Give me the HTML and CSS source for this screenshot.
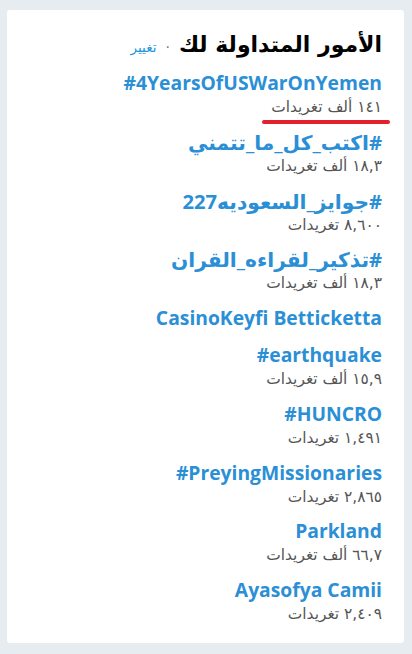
FILE: index.html
```html
<!DOCTYPE html>
<html lang="ar" dir="rtl">
<head>
  <meta charset="UTF-8"/>
  <meta name="viewport" content="width=device-width, initial-scale=1"/>
  <title>الأمور المتداولة لك</title>
  <link rel="stylesheet" href="styles.css">
</head>
<body>

  <!-- Trends card -->
  <div class="trends">
    <div class="trends-header">
      <h3>الأمور المتداولة لك</h3>
      <span class="dot">·</span>
      <a class="change" href="#">تغيير</a>
    </div>

    <ul class="trend-list">
      <li class="trend marked">
        <a class="trend-name" href="#" dir="ltr">#4YearsOfUSWarOnYemen</a>
        <div class="trend-count">١٤١ ألف تغريدات</div>
        <span class="mark"></span>
      </li>
      <li class="trend">
        <a class="trend-name ar" href="#">#اكتب_كل_ما_تتمني</a>
        <div class="trend-count">١٨,٣ ألف تغريدات</div>
      </li>
      <li class="trend">
        <a class="trend-name ar" href="#">#جوايز_السعوديه227</a>
        <div class="trend-count">٨,٦٠٠ تغريدات</div>
      </li>
      <li class="trend">
        <a class="trend-name ar" href="#">#تذكير_لقراءه_القران</a>
        <div class="trend-count">١٨,٣ ألف تغريدات</div>
      </li>
      <li class="trend">
        <a class="trend-name" href="#" dir="ltr">CasinoKeyfi Betticketta</a>
      </li>
      <li class="trend">
        <a class="trend-name" href="#" dir="ltr">#earthquake</a>
        <div class="trend-count">١٥,٩ ألف تغريدات</div>
      </li>
      <li class="trend">
        <a class="trend-name" href="#" dir="ltr">#HUNCRO</a>
        <div class="trend-count">١,٤٩١ تغريدات</div>
      </li>
      <li class="trend">
        <a class="trend-name" href="#" dir="ltr">#PreyingMissionaries</a>
        <div class="trend-count">٢,٨٦٥ تغريدات</div>
      </li>
      <li class="trend">
        <a class="trend-name" href="#" dir="ltr">Parkland</a>
        <div class="trend-count">٦٦,٧ ألف تغريدات</div>
      </li>
      <li class="trend">
        <a class="trend-name" href="#" dir="ltr">Ayasofya Camii</a>
        <div class="trend-count">٢,٤٠٩ تغريدات</div>
      </li>
    </ul>
  </div>

</body>
</html>
```

FILE: styles.css
```css
* { box-sizing: border-box; }
body {
  margin: 0;
  padding: 10px 8px 8px 7px;
  background: #e6ecf0;
  font-family: 'DejaVu Sans', sans-serif;
  color: #14171a;
}

/* Card */
.trends {
  background: #fff;
  border-radius: 3px;
  padding: 22px 22px 20px 20px;
  height: 633px;
  overflow: hidden;
}

/* Header */
.trends-header {
  display: flex;
  align-items: baseline;
  gap: 9px;
  margin-bottom: 10px;
}
.trends-header h3 {
  margin: 0;
  font-size: 22px;
  font-weight: bold;
  color: #000;
}
.dot { font-size: 14px; color: #657786; }
.change {
  font-size: 13.5px;
  color: #1b95e0;
  text-decoration: none;
}

/* List */
.trend-list {
  list-style: none;
  margin: 0;
  padding: 0;
}
.trend {
  position: relative;
  padding: 3px 0 7.8px;
  text-align: right;
}
.trend-name {
  display: block;
  font-family: 'Open Sans', 'DejaVu Sans', sans-serif;
  font-size: 19.3px;
  font-weight: bold;
  color: #2b8fd6;
  text-decoration: none;
  text-align: right;
  line-height: 26px;
}
.trend-name.ar { font-size: 20.2px; }
.trend-count {
  font-size: 15.4px;
  color: #555;
  line-height: 22px;
}

/* red annotation line under the first count */
.mark {
  position: absolute;
  right: -8px;
  bottom: 2px;
  width: 128px;
  height: 4px;
  border-radius: 2px;
  background: #e3202b;
}
```
